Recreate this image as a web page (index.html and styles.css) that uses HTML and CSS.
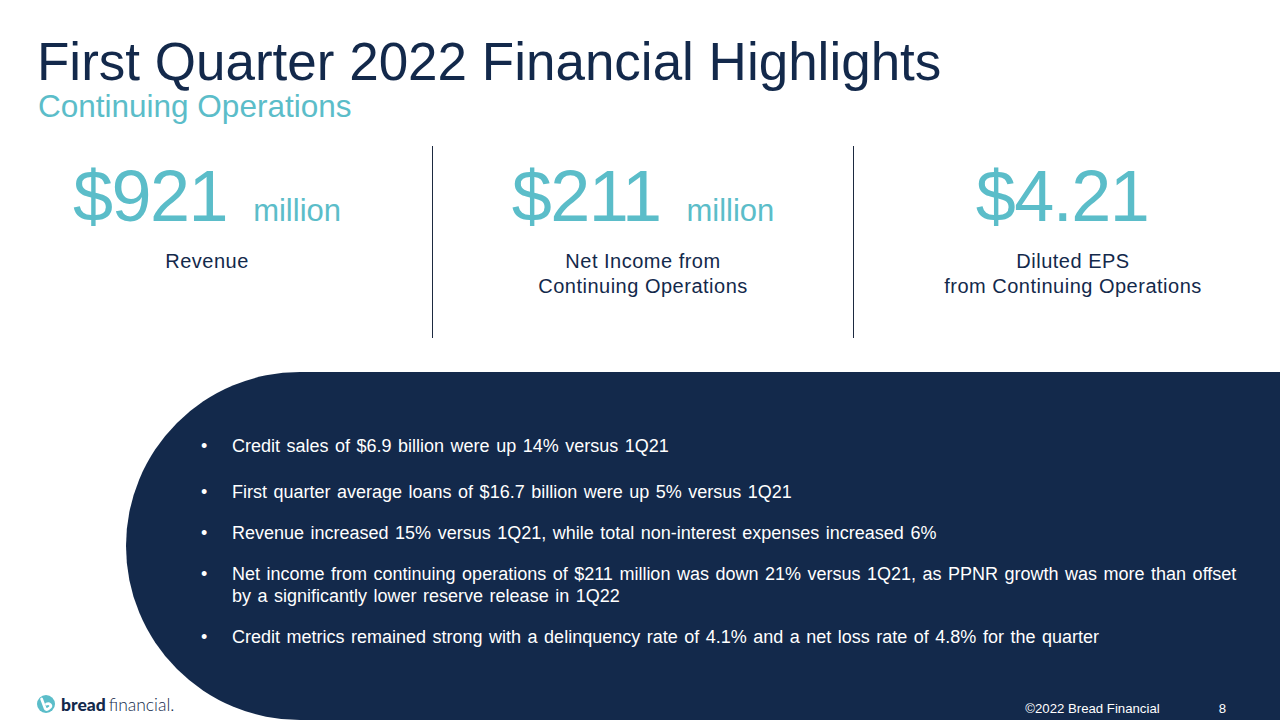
FILE: index.html
```html
<!DOCTYPE html>
<html lang="en">
<head>
<meta charset="utf-8">
<title>First Quarter 2022 Financial Highlights</title>
<link rel="stylesheet" href="styles.css">
</head>
<body>
<div class="slide">
  <header class="head">
    <h1 class="title">First Quarter 2022 Financial Highlights</h1>
    <p class="subtitle">Continuing Operations</p>
  </header>

  <section class="stats">
    <div class="stat stat-first">
      <div class="value"><span class="num">$921</span><span class="unit">million</span></div>
      <div class="label">Revenue</div>
    </div>
    <div class="divider"></div>
    <div class="stat stat-mid">
      <div class="value"><span class="num">$211</span><span class="unit">million</span></div>
      <div class="label">Net Income from<br>Continuing Operations</div>
    </div>
    <div class="divider"></div>
    <div class="stat stat-last">
      <div class="value value-solo"><span class="num">$4.21</span></div>
      <div class="label">Diluted EPS<br>from Continuing Operations</div>
    </div>
  </section>

  <section class="panel">
    <ul class="bullets">
      <li class="item item-first"><span class="dot">•</span><span class="text">Credit sales of $6.9 billion were up 14% versus 1Q21</span></li>
      <li class="item"><span class="dot">•</span><span class="text">First quarter average loans of $16.7 billion were up 5% versus 1Q21</span></li>
      <li class="item"><span class="dot">•</span><span class="text">Revenue increased 15% versus 1Q21, while total non-interest expenses increased 6%</span></li>
      <li class="item"><span class="dot">•</span><span class="text">Net income from continuing operations of $211 million was down 21% versus 1Q21, as PPNR growth was more than offset by a significantly lower reserve release in 1Q22</span></li>
      <li class="item"><span class="dot">•</span><span class="text">Credit metrics remained strong with a delinquency rate of 4.1% and a net loss rate of 4.8% for the quarter</span></li>
    </ul>
  </section>

  <footer class="foot">
    <div class="logo">
      <svg class="logo-mark" width="18" height="18" viewBox="0 0 18 18" aria-hidden="true">
        <circle cx="9" cy="9" r="9" fill="#5bbdc9"/>
        <path d="M4.6 4 L8.2 13.4 Q9 15.2 10.9 14.1 L13 12.5 Q14.6 11 13.1 9.4 Q11.6 8 9.6 9" fill="none" stroke="#fff" stroke-width="2.8" stroke-linecap="round" stroke-linejoin="round"/>
      </svg>
      <span class="logo-bold">bread</span><span class="logo-light">financial.</span>
    </div>
    <div class="spacer"></div>
    <span class="copy">©2022 Bread Financial</span>
    <span class="page">8</span>
  </footer>
</div>
</body>
</html>
```

FILE: styles.css
```css
html, body {
  margin: 0;
  padding: 0;
  background: #ffffff;
}

body {
  font-family: "Liberation Sans", Arial, sans-serif;
  color: #13294b;
}

.slide {
  position: relative;
  width: 1280px;
  height: 720px;
  overflow: hidden;
  background: #ffffff;
}

/* Header */
.head {
  padding: 34px 0 0 37px;
}

.title {
  margin: 0;
  font-size: 53px;
  line-height: 55px;
  font-weight: 400;
  color: #13294b;
}

.subtitle {
  margin: 0 0 0 1px;
  font-size: 31.5px;
  line-height: 34px;
  font-weight: 400;
  color: #5bbdc9;
}

/* Stats row */
.stats {
  display: flex;
  height: 192px;
  margin-top: 23px;
}

.stat {
  padding-top: 12px;
  text-align: center;
  box-sizing: border-box;
}

.stat-first {
  width: 414px;
  margin-right: 18px;
}

.stat-mid {
  width: 420px;
}

.stat-last {
  flex: 1;
  padding-left: 12px;
}

.divider {
  width: 1px;
  background: #1d2a40;
}

.value {
  font-size: 72px;
  line-height: 76px;
  color: #5bbdc9;
  white-space: nowrap;
}

.num {
  letter-spacing: -1.5px;
}

.value-solo {
  padding-right: 22px;
}

.unit {
  font-size: 31px;
  line-height: 1;
  margin-left: 26px;
  letter-spacing: 0;
}

.label {
  margin-top: 15px;
  font-size: 20px;
  line-height: 25px;
  letter-spacing: 0.5px;
  color: #13294b;
}

/* Dark panel */
.panel {
  margin: 34px 0 0 126px;
  height: 348px;
  background: #13294b;
  border-radius: 174px 0 0 174px;
  padding: 63px 22px 0 75px;
  box-sizing: border-box;
  color: #ffffff;
}

.bullets {
  list-style: none;
  margin: 0;
  padding: 0;
}

.item {
  display: flex;
  font-size: 18px;
  line-height: 22px;
  margin-bottom: 19px;
}

.item-first {
  margin-bottom: 24px;
}

.dot {
  flex: 0 0 31px;
}

.text {
  flex: 1;
  word-spacing: 1.5px;
}

/* Footer over the panel */
.foot {
  position: absolute;
  left: 0;
  right: 0;
  bottom: 0;
  height: 30px;
  display: flex;
  align-items: center;
  padding: 0 54px 0 37px;
}

.logo {
  display: flex;
  align-items: center;
  font-family: Lato, "Noto Sans", sans-serif;
  font-size: 17.5px;
  line-height: 18px;
  color: #13294b;
}

.logo-mark {
  display: block;
  margin-right: 6px;
  margin-top: -2px;
}

.logo-bold {
  font-weight: 900;
}

.logo-light {
  font-weight: 300;
  margin-left: 3px;
}

.spacer {
  flex: 1;
}

.copy,
.page {
  font-size: 13.2px;
  line-height: 15px;
  color: #ffffff;
  padding-top: 6px;
}

.page {
  margin-left: 59px;
}
```
